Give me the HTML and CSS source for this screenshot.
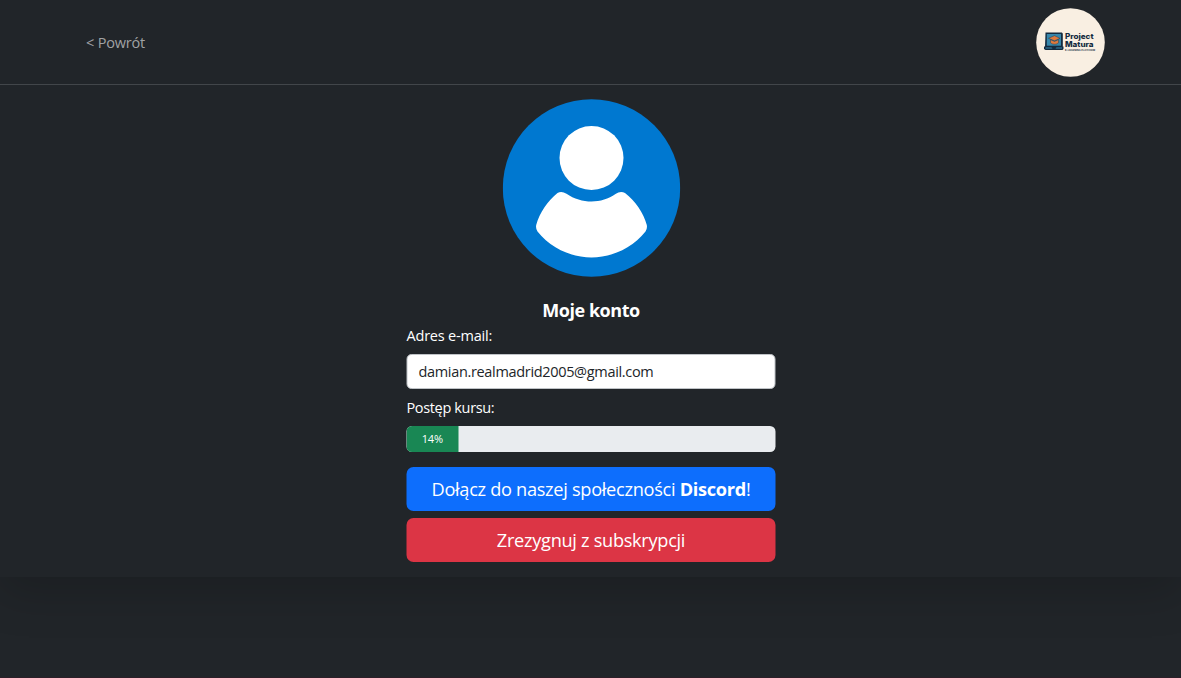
FILE: index.html
```html
<!DOCTYPE html>
<html lang="pl">
<head>
<meta charset="utf-8">
<title>Moje konto</title>
<link rel="stylesheet" href="styles.css">
</head>
<body>
<div class="panel">
  <header class="header">
    <a class="back">&lt; Powrót</a>
    <svg class="logo" viewBox="0 0 69 69" role="img" aria-label="Project Matura">
      <circle cx="34.5" cy="34.5" r="34.3" fill="#f9efe2"/>
      <path d="M9.500 24.500h16.300l1 1v14H9z" fill="#142b40"/>
      <path d="M10.800 26h14.200v11.700H10.800z" fill="#3787ac"/>
      <path d="M8 38.500h19.500v2.500l-1 1h-17l-1.500-1z" fill="#142b40"/>
      <path d="M9.500 39.600h6l1 .8h3l1-.8h5.500v.9H9.500z" fill="#3787ac"/>
      <path d="M12.500 30.300l6-2.600 5.500 2.600-5.500 2.500zM14.500 31.700l4 1.700 4-1.700v3c-2 2-6 2-8 0z" fill="#df793d" stroke="#142b40" stroke-width=".4"/>
      <text class="logo-name" x="29" y="31" textLength="28.500" lengthAdjust="spacingAndGlyphs">Project</text>
      <text class="logo-name" x="29" y="38.800" textLength="28.500" lengthAdjust="spacingAndGlyphs">Matura</text>
      <text class="logo-tag" x="29" y="42.600" textLength="30" lengthAdjust="spacingAndGlyphs">E-LEARNING PLATFORM</text>
    </svg>
  </header>
  <main class="account">
    <svg class="avatar" viewBox="0 0 178 178" aria-hidden="true">
      <circle cx="89" cy="89" r="88.700" fill="#0078d0"/>
      <circle cx="89" cy="59" r="32" fill="#fff"/>
      <path d="M55 94Q59 91.500 64 94.700C79 105 99 105 113 95Q118 91.500 122.500 94C133 102 141 114 144.300 126Q145 129.500 143 132.500C130 149 109 158.500 89 158.500S48 149 35 132.500Q33 129.500 33.700 126C37 114 45 102 55 94Z" fill="#fff"/>
    </svg>
    <h1 class="title">Moje konto</h1>
    <label class="label label-email" for="email">Adres e-mail:</label>
    <input class="input" id="email" value="damian.realmadrid2005@gmail.com" readonly>
    <div class="label label-progress">Postęp kursu:</div>
    <div class="progress"><div class="bar" style="width:14%">14%</div></div>
    <button class="btn btn-discord"><span>Dołącz do naszej społeczności <b>Discord</b>!</span></button>
    <button class="btn btn-cancel"><span>Zrezygnuj z subskrypcji</span></button>
  </main>
</div>
</body>
</html>
```
FILE: styles.css
```css
* { box-sizing: border-box; }
body {
  margin: 0;
  height: 678px;
  border-bottom: 1px solid #2c1f28;
  background: #212529;
  color: #fff;
  font-family: "Segoe UI", "Open Sans", "Noto Sans", sans-serif;
  font-size: 14.5px;
  overflow: hidden;
}
.panel {
  height: 577px;
  background: #212529;
  box-shadow: 0 15px 44px rgba(0, 0, 0, .175);
}
.header {
  display: flex;
  justify-content: space-between;
  align-items: center;
  height: 85px;
  padding: 0 76px 0 86px;
  border-bottom: 1px solid #42464a;
}
.back { padding-top: 1px; color: #a0a2a4; letter-spacing: -.2px; }
.logo { width: 69px; height: 69px; }
.logo-name { font: 800 7.200px/1 "Inter", sans-serif; fill: #142b40; }
.logo-tag { font: 600 2.400px/1 "Inter", sans-serif; fill: #142b40; }
.account {
  display: flex;
  flex-direction: column;
  width: 369px;
  margin: 0 auto;
  padding: 14px 0 0;
  transform: translateX(.5px);
}
.avatar { width: 178px; height: 178px; align-self: center; }
.title {
  margin: 21px 0 0;
  height: 25px;
  line-height: 24px;
  text-align: center;
  font-size: 18px;
  font-weight: 700;
  letter-spacing: -.45px;
}
.label { height: 22px; margin-top: 2px; line-height: 22px; letter-spacing: -.35px; }
.label-email { letter-spacing: -.2px; }
.input {
  height: 35px;
  margin-top: 7px;
  padding: 0 11px;
  border: 1px solid #bfc3c7;
  border-radius: 5px;
  background: #fff;
  color: #212529;
  font: inherit;
  letter-spacing: -.33px;
}
.label-progress { margin-top: 8px; }
.progress {
  display: flex;
  height: 26px;
  margin-top: 7px;
  border-radius: 5.500px;
  overflow: hidden;
  background: #e9ecef;
}
.bar {
  background: #198754;
  text-align: center;
  font-size: 11px;
  line-height: 26px;
  letter-spacing: -.2px;
}
.btn {
  height: 44px;
  margin-top: 15px;
  padding: 0;
  border: 0;
  border-radius: 7px;
  color: #fff;
  font-family: inherit;
  font-size: 18.200px;
  letter-spacing: -.3px;
  white-space: nowrap;
}
.btn-discord { background: #0d6efd; }
.btn-cancel { margin-top: 7px; background: #dc3545; }
```
